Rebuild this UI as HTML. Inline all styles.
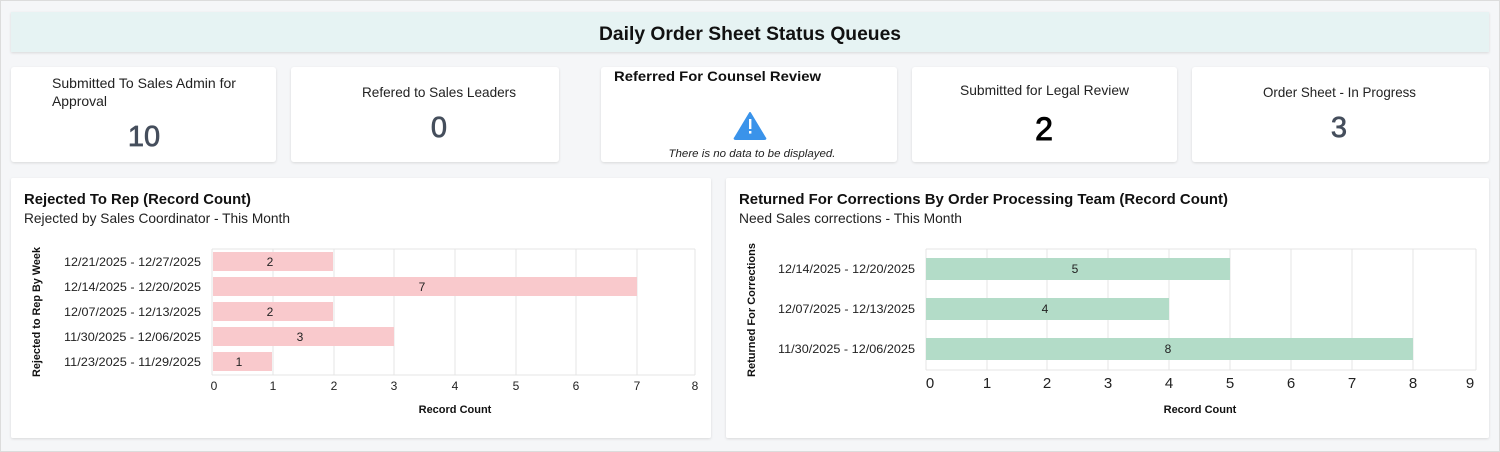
<!DOCTYPE html>
<html><head><meta charset="utf-8"><style>
html,body{margin:0;padding:0;background:#fff}
svg{display:block}
text{font-family:"Liberation Sans",sans-serif}
</style></head><body>
<svg width="1500" height="452" viewBox="0 0 1500 452" xmlns="http://www.w3.org/2000/svg">
<defs>
<filter id="sh" x="-5%" y="-10%" width="110%" height="125%"><feDropShadow dx="0" dy="1" stdDeviation="1.2" flood-color="#000" flood-opacity="0.12"/></filter>
</defs>
<rect x="0.5" y="0.5" width="1499" height="451" fill="#f5f6f8" stroke="#dcdcdc"/>
<rect x="11" y="12" width="1478" height="40" fill="#e6f3f3" filter="url(#sh)"/>
<text x="750" y="40" text-anchor="middle" font-size="19" font-weight="bold" fill="#111" textLength="302" lengthAdjust="spacingAndGlyphs">Daily Order Sheet Status Queues</text>

<g fill="#fff" filter="url(#sh)">
<rect x="11" y="67" width="265" height="95" rx="3"/>
<rect x="291" y="67" width="268" height="95" rx="3"/>
<rect x="601" y="67" width="296" height="95" rx="3"/>
<rect x="912" y="67" width="265" height="95" rx="3"/>
<rect x="1192" y="67" width="297" height="95" rx="3"/>
<rect x="11" y="178" width="700" height="260" rx="2"/>
<rect x="726" y="178" width="763" height="260" rx="2"/>
</g>

<g font-size="14" fill="#222">
<text x="52" y="88" textLength="184" lengthAdjust="spacingAndGlyphs">Submitted To Sales Admin for</text>
<text x="52" y="106" textLength="55" lengthAdjust="spacingAndGlyphs">Approval</text>
<text x="362" y="97" textLength="154" lengthAdjust="spacingAndGlyphs">Refered to Sales Leaders</text>
<text x="960" y="95" textLength="169" lengthAdjust="spacingAndGlyphs">Submitted for Legal Review</text>
<text x="1263" y="97" textLength="153" lengthAdjust="spacingAndGlyphs">Order Sheet - In Progress</text>
<text x="614" y="81" font-weight="bold" fill="#111" textLength="207" lengthAdjust="spacingAndGlyphs">Referred For Counsel Review</text>
</g>
<g font-size="29" fill="#454e5c" stroke="#454e5c" stroke-width="0.7" text-anchor="middle">
<text x="144" y="146">10</text>
<text x="439" y="137">0</text>
<text x="1339" y="137">3</text>
<text x="1044" y="140" fill="#000" stroke="#000" stroke-width="1" font-size="32">2</text>
</g>
<path d="M750 113 L765 138 Q766 139 764 139 L736 139 Q734 139 735 138 Z" fill="#3a93ea" stroke="#3a93ea" stroke-width="2" stroke-linejoin="round"/>
<rect x="749" y="119" width="2.4" height="10" fill="#fff"/>
<rect x="749" y="131" width="2.4" height="2.6" fill="#fff"/>
<text x="752" y="157" text-anchor="middle" font-size="11" font-style="italic" fill="#222" textLength="167" lengthAdjust="spacingAndGlyphs">There is no data to be displayed.</text>

<text x="24" y="204" font-size="15" font-weight="bold" fill="#111" textLength="227" lengthAdjust="spacingAndGlyphs">Rejected To Rep (Record Count)</text>
<text x="24" y="223" font-size="14" fill="#222" textLength="266" lengthAdjust="spacingAndGlyphs">Rejected by Sales Coordinator - This Month</text>
<text x="739" y="204" font-size="15" font-weight="bold" fill="#111" textLength="489" lengthAdjust="spacingAndGlyphs">Returned For Corrections  By Order Processing Team (Record Count)</text>
<text x="739" y="223" font-size="14" fill="#222" textLength="223" lengthAdjust="spacingAndGlyphs">Need Sales corrections - This Month</text>

<!-- left chart -->
<g stroke="#e4e4e4" stroke-width="1">
<line x1="212" y1="249" x2="695" y2="249"/>
<line x1="212" y1="375" x2="695" y2="375"/>
<line x1="273" y1="249" x2="273" y2="375"/><line x1="334" y1="249" x2="334" y2="375"/>
<line x1="394" y1="249" x2="394" y2="375"/><line x1="455" y1="249" x2="455" y2="375"/>
<line x1="516" y1="249" x2="516" y2="375"/><line x1="576" y1="249" x2="576" y2="375"/>
<line x1="637" y1="249" x2="637" y2="375"/><line x1="695" y1="249" x2="695" y2="375"/>
<line x1="212" y1="249" x2="212" y2="375"/>
</g>
<g fill="#f9c9cc">
<rect x="213" y="252" width="120" height="19"/>
<rect x="213" y="277" width="424" height="19"/>
<rect x="213" y="302" width="120" height="19"/>
<rect x="213" y="327" width="181" height="19"/>
<rect x="213" y="352" width="59" height="19"/>
</g>
<g font-size="12" fill="#222" text-anchor="middle">
<text x="270" y="266">2</text><text x="422" y="291">7</text><text x="270" y="316">2</text><text x="300" y="341">3</text><text x="239" y="366">1</text>
</g>
<g font-size="12" fill="#222" text-anchor="end">
<text x="201" y="266" textLength="137" lengthAdjust="spacingAndGlyphs">12/21/2025 - 12/27/2025</text>
<text x="201" y="291" textLength="137" lengthAdjust="spacingAndGlyphs">12/14/2025 - 12/20/2025</text>
<text x="201" y="316" textLength="137" lengthAdjust="spacingAndGlyphs">12/07/2025 - 12/13/2025</text>
<text x="201" y="341" textLength="137" lengthAdjust="spacingAndGlyphs">11/30/2025 - 12/06/2025</text>
<text x="201" y="366" textLength="137" lengthAdjust="spacingAndGlyphs">11/23/2025 - 11/29/2025</text>
</g>
<g font-size="12" fill="#222" text-anchor="middle">
<text x="214" y="390">0</text><text x="273" y="390">1</text><text x="334" y="390">2</text><text x="394" y="390">3</text><text x="455" y="390">4</text><text x="516" y="390">5</text><text x="576" y="390">6</text><text x="637" y="390">7</text><text x="695" y="390">8</text>
</g>
<text x="455" y="413" text-anchor="middle" font-size="11" font-weight="bold" fill="#111">Record Count</text>
<text transform="translate(40,312) rotate(-90)" text-anchor="middle" font-size="11" font-weight="bold" fill="#111" textLength="130" lengthAdjust="spacingAndGlyphs">Rejected to Rep By Week</text>

<!-- right chart -->
<g stroke="#e4e4e4" stroke-width="1">
<line x1="926" y1="249" x2="1476" y2="249"/>
<line x1="926" y1="370" x2="1476" y2="370"/>
<line x1="926" y1="249" x2="926" y2="370"/>
<line x1="987" y1="249" x2="987" y2="370"/><line x1="1047" y1="249" x2="1047" y2="370"/>
<line x1="1108" y1="249" x2="1108" y2="370"/><line x1="1169" y1="249" x2="1169" y2="370"/>
<line x1="1230" y1="249" x2="1230" y2="370"/><line x1="1291" y1="249" x2="1291" y2="370"/>
<line x1="1352" y1="249" x2="1352" y2="370"/><line x1="1413" y1="249" x2="1413" y2="370"/>
<line x1="1476" y1="249" x2="1476" y2="370"/>
</g>
<g fill="#b3dcc8">
<rect x="926" y="258" width="304" height="22"/>
<rect x="926" y="298" width="243" height="22"/>
<rect x="926" y="338" width="487" height="22"/>
</g>
<g font-size="12" fill="#222" text-anchor="middle">
<text x="1075" y="273">5</text><text x="1045" y="313">4</text><text x="1168" y="353">8</text>
</g>
<g font-size="12" fill="#222" text-anchor="end">
<text x="915" y="273" textLength="137" lengthAdjust="spacingAndGlyphs">12/14/2025 - 12/20/2025</text>
<text x="915" y="313" textLength="137" lengthAdjust="spacingAndGlyphs">12/07/2025 - 12/13/2025</text>
<text x="915" y="353" textLength="137" lengthAdjust="spacingAndGlyphs">11/30/2025 - 12/06/2025</text>
</g>
<g font-size="15" fill="#222" text-anchor="middle">
<text x="930" y="388">0</text><text x="987" y="388">1</text><text x="1047" y="388">2</text><text x="1108" y="388">3</text><text x="1169" y="388">4</text><text x="1230" y="388">5</text><text x="1291" y="388">6</text><text x="1352" y="388">7</text><text x="1413" y="388">8</text><text x="1470" y="388">9</text>
</g>
<text x="1200" y="413" text-anchor="middle" font-size="11" font-weight="bold" fill="#111">Record Count</text>
<text transform="translate(755,310) rotate(-90)" text-anchor="middle" font-size="11" font-weight="bold" fill="#111" textLength="134" lengthAdjust="spacingAndGlyphs">Returned For Corrections</text>
</svg>
</body></html>
